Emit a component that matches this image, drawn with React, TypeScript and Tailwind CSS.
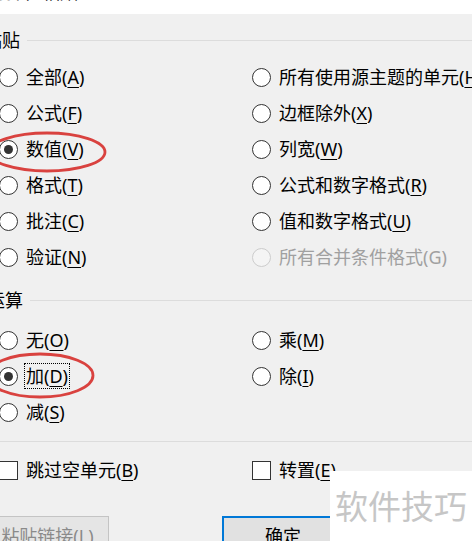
import React from "react";

const FONT = { fontFamily: '"Noto Sans", "Noto Sans CJK SC", sans-serif' };

function Label({ text, k, focus }: { text: string; k?: string; focus?: boolean }) {
  let content: React.ReactNode = text;
  if (k) {
    const i = text.lastIndexOf("(" + k);
    content = (
      <>
        {text.slice(0, i + 1)}
        <span className="underline underline-offset-[3px] decoration-1">{k}</span>
        {text.slice(i + 2)}
      </>
    );
  }
  if (focus) {
    return (
      <span className="inline-block whitespace-nowrap leading-[24px] border border-dotted border-black -ml-[2px] pl-[1px] pr-[1px]">
        {content}
      </span>
    );
  }
  return <span className="whitespace-nowrap leading-[24px]">{content}</span>;
}

function Radio({
  text,
  k,
  checked,
  disabled,
  focus,
}: {
  text: string;
  k?: string;
  checked?: boolean;
  disabled?: boolean;
  focus?: boolean;
}) {
  return (
    <div className={"flex items-center h-[36px] " + (disabled ? "text-[#a0a0a0]" : "text-[#000]")}>
      <div
        className={
          "w-[19px] h-[19px] shrink-0 rounded-full border flex items-center justify-center " +
          (disabled ? "border-[#cccccc] bg-[#f4f4f4]" : "border-[#333333] bg-white")
        }
      >
        {checked && <div className="w-[9px] h-[9px] rounded-full bg-[#333333]" />}
      </div>
      <div className="ml-[8px] flex items-center">
        <Label text={text} k={k} focus={focus} />
      </div>
    </div>
  );
}

function Check({ text, k }: { text: string; k: string }) {
  return (
    <div className="flex items-center h-[36px] text-black">
      <div className="w-[19px] h-[19px] shrink-0 border border-[#333333] bg-white" />
      <div className="ml-[8px]">
        <Label text={text} k={k} />
      </div>
    </div>
  );
}

function Header({ text, shift }: { text: string; shift: string }) {
  return (
    <div className="flex items-center h-[24px] text-black">
      <span className={"whitespace-nowrap leading-[24px] w-[43px] shrink-0 " + shift}>{text}</span>
      <div className="flex-1 h-px bg-[#dcdcdc]" />
    </div>
  );
}

export default function App() {
  return (
    <div
      className="relative w-[472px] h-[541px] overflow-hidden bg-[#f0f0f0] text-[18px]"
      style={FONT}
    >
      {/* title bar strip */}
      <div className="relative h-[14px] bg-white overflow-hidden">
        <div className="absolute left-[-12px] top-[-20px] text-[18px] leading-[24px] text-black whitespace-nowrap">
          选择性粘贴
        </div>
      </div>

      {/* 粘贴 section */}
      <div className="pt-[14px] h-[45px]">
        <Header text="粘贴" shift="-ml-[16px]" />
      </div>
      <div className="grid grid-cols-[253px_1fr] -ml-[1px]">
        <div className="flex flex-col">
          <Radio text="全部(A)" k="A" />
          <Radio text="公式(F)" k="F" />
          <Radio text="数值(V)" k="V" checked />
          <Radio text="格式(T)" k="T" />
          <Radio text="批注(C)" k="C" />
          <Radio text="验证(N)" k="N" />
        </div>
        <div className="flex flex-col overflow-hidden">
          <Radio text="所有使用源主题的单元(H)" k="H" />
          <Radio text="边框除外(X)" k="X" />
          <Radio text="列宽(W)" k="W" />
          <Radio text="公式和数字格式(R)" k="R" />
          <Radio text="值和数字格式(U)" k="U" />
          <Radio text="所有合并条件格式(G)" disabled />
        </div>
      </div>

      {/* 运算 section */}
      <div className="pt-[13px] h-[47px]">
        <Header text="运算" shift="-ml-[13px]" />
      </div>
      <div className="grid grid-cols-[253px_1fr] -ml-[1px]">
        <div className="flex flex-col">
          <Radio text="无(O)" k="O" />
          <Radio text="加(D)" k="D" checked focus />
          <Radio text="减(S)" k="S" />
        </div>
        <div className="flex flex-col">
          <Radio text="乘(M)" k="M" />
          <Radio text="除(I)" k="I" />
        </div>
      </div>

      <div className="mt-[11px] h-px bg-[#dcdcdc]" />

      <div className="mt-[10px] grid grid-cols-[253px_1fr] -ml-[1px]">
        <Check text="跳过空单元(B)" k="B" />
        <Check text="转置(E)" k="E" />
      </div>

      {/* buttons */}
      <div className="mt-[28px] flex">
        <div className="-ml-[14px] w-[123px] h-[40px] shrink-0 bg-[#e5e5e5] border border-[#c4c4c4] flex items-center justify-center text-[#8a8a8a] whitespace-nowrap">
          粘贴链接(L)
        </div>
        <div className="ml-[113px] w-[122px] h-[40px] shrink-0 bg-[#e1e1e1] border-2 border-[#0078d7] flex items-center justify-center text-black">
          确定
        </div>
      </div>

      {/* red annotation ellipses */}
      <svg className="absolute left-0 top-0 pointer-events-none" width="472" height="541">
        <ellipse cx="47" cy="152" rx="58" ry="19" fill="none" stroke="#d9423f" strokeWidth="2.8" />
        <ellipse cx="40" cy="375.5" rx="53" ry="21.5" fill="none" stroke="#d9423f" strokeWidth="2.8" />
      </svg>

      {/* watermark */}
      <div className="absolute left-[330px] top-[471px] w-[142px] h-[70px] bg-white flex items-center pl-[5px]">
        <span className="text-[33px] leading-none text-[#c6c6c6] whitespace-nowrap">软件技巧</span>
      </div>
    </div>
  );
}
